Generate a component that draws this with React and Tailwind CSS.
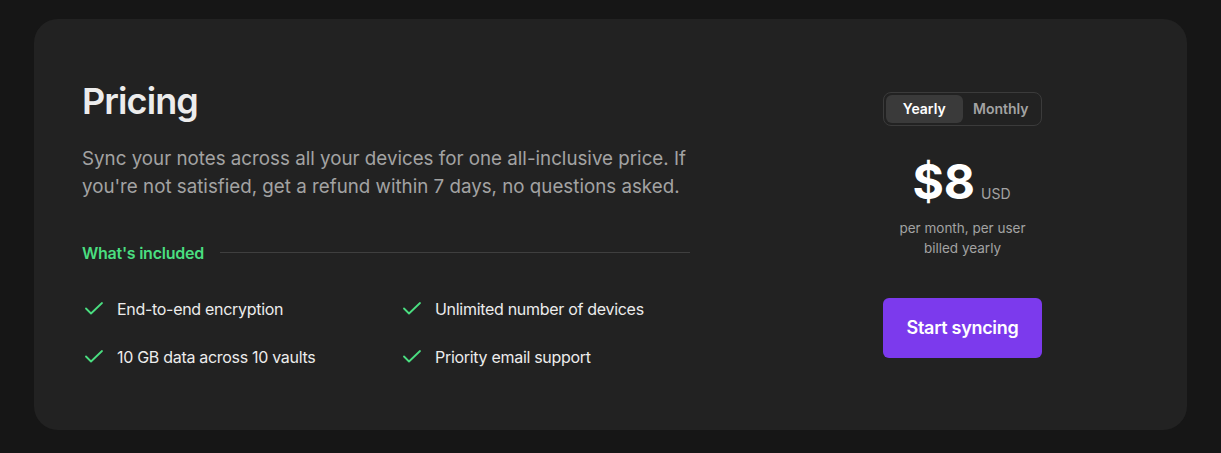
import React from "react";

function Check() {
  return (
    <svg width="18" height="13" viewBox="0 0 18 13" fill="none" className="shrink-0">
      <path d="M1 6.5 L6 11.5 L17 1" stroke="#4ade80" strokeWidth="1.8" strokeLinecap="round" strokeLinejoin="round" />
    </svg>
  );
}

const features = [
  "End-to-end encryption",
  "Unlimited number of devices",
  "10 GB data across 10 vaults",
  "Priority email support",
];

export default function App() {
  return (
    <div className="min-h-[453px] w-full bg-[#161616] pt-[19px] px-[34px] pb-[23px]" style={{ fontFamily: "Inter, 'Noto Sans', sans-serif" }}>
      <div className="flex items-center justify-between rounded-3xl bg-[#222222] h-[411px] pl-12 pr-12">
        <div className="w-[608px]">
          <h1 className="text-4xl leading-10 font-semibold text-[#ececec] tracking-tight">Pricing</h1>
          <p className="mt-6 text-[18.75px] leading-7 text-[#a3a3a3] w-[630px]">
            Sync your notes across all your devices for one all-inclusive price. If you're not satisfied, get a refund within 7 days, no questions asked.
          </p>
          <div className="mt-10 flex items-center gap-4">
            <span className="text-base leading-6 font-semibold text-[#4ade80] whitespace-nowrap tracking-[-0.25px]">What's included</span>
            <div className="h-px flex-1 bg-[#3f3f3f]" />
          </div>
          <div className="mt-8 grid grid-cols-2 gap-x-[28px] gap-y-6">
            {features.map((f) => (
              <div key={f} className="flex items-center">
                <div className="w-[35px] pl-[3px] flex items-center">
                  <Check />
                </div>
                <span className="text-base leading-6 text-[#ececec] tracking-[-0.3px]">{f}</span>
              </div>
            ))}
          </div>
        </div>
        <div className="w-[353px] flex flex-col items-center">
          <div className="flex w-[159px] rounded-lg border border-[#3b3b3b] p-[2px]">
            <button className="flex-1 rounded-md bg-[#3a3a3a] py-1 text-sm leading-5 font-semibold text-white">Yearly</button>
            <button className="flex-1 rounded-md py-1 text-sm leading-5 font-semibold text-[#a3a3a3]">Monthly</button>
          </div>
          <div className="mt-8 flex items-baseline gap-[6px] pr-[2px]">
            <span className="text-5xl leading-none font-bold text-white">$8</span>
            <span className="text-sm leading-5 text-[#a3a3a3]">USD</span>
          </div>
          <div className="mt-3 text-center text-[13.5px] leading-5 text-[#a3a3a3]">
            <div>per month, per user</div>
            <div>billed yearly</div>
          </div>
          <button className="mt-10 w-[159px] h-[60px] rounded-md bg-[#7c3aed] text-lg leading-7 font-semibold text-white tracking-[-0.3px]">
            Start syncing
          </button>
        </div>
      </div>
    </div>
  );
}
